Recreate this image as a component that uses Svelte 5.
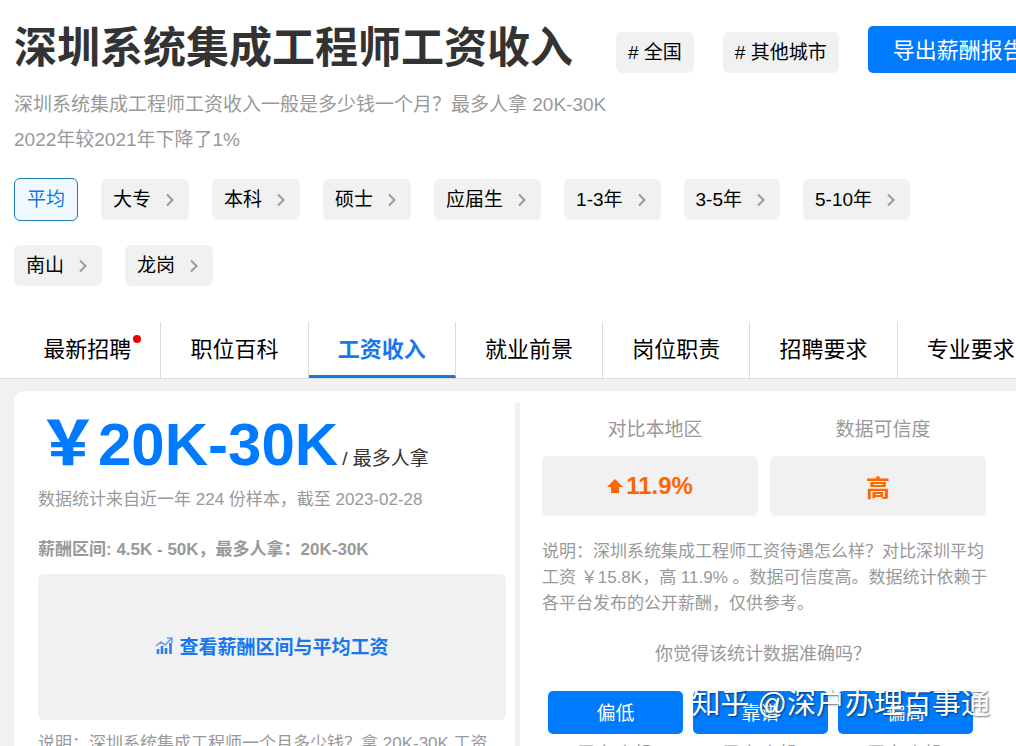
<script lang="ts">
	const filters = ['大专', '本科', '硕士', '应届生', '1-3年', '3-5年', '5-10年', '南山', '龙岗'];

	const tabs = [
		{ name: '最新招聘', dot: true },
		{ name: '职位百科' },
		{ name: '工资收入' },
		{ name: '就业前景' },
		{ name: '岗位职责' },
		{ name: '招聘要求' },
		{ name: '专业要求' }
	];

	const votes = [
		{ name: '偏低', note: '已有人投' },
		{ name: '靠谱', note: '已有人投' },
		{ name: '偏高', note: '已有人投' }
	];

	let activeFilter = $state('平均');
	let activeTab = $state('工资收入');
</script>

<div class="page">
	<header>
		<div class="title-row">
			<h1>深圳系统集成工程师工资收入</h1>
			<a class="chip" href="#country"># 全国</a>
			<a class="chip" href="#cities"># 其他城市</a>
			<button class="export">导出薪酬报告</button>
		</div>
		<p class="intro">
			深圳系统集成工程师工资收入一般是多少钱一个月？最多人拿 20K-30K<br />2022年较2021年下降了1%
		</p>
		<div class="filters">
			<button class="chip" class:active={activeFilter === '平均'} onclick={() => (activeFilter = '平均')}>平均</button>
			{#each filters as filter}
				<button class="chip" class:active={activeFilter === filter} onclick={() => (activeFilter = filter)}>
					{filter}
					<svg class="arrow" viewBox="0 0 10 14" width="10" height="14">
						<path d="M2 1.500l5.500 5.500-5.500 5.500" fill="none" stroke="#999" stroke-width="2" />
					</svg>
				</button>
			{/each}
		</div>
	</header>

	<nav>
		{#each tabs as tab}
			<a
				href="#{tab.name}"
				class:current={activeTab === tab.name}
				onclick={() => (activeTab = tab.name)}
			>
				<span class="label">{tab.name}{#if tab.dot}<i class="dot"></i>{/if}</span>
			</a>
		{/each}
	</nav>

	<main>
		<div class="card">
			<section class="salary">
				<h2><strong>￥20K-30K</strong><small>/ 最多人拿</small></h2>
				<p class="source">数据统计来自近一年 224 份样本，截至 2023-02-28</p>
				<p class="range">薪酬区间: 4.5K - 50K，最多人拿：20K-30K</p>
				<button class="chart">
					<svg viewBox="0 0 18 18" width="18" height="18">
						<path d="M1 9l5-4 4 3 6-6M12 1h5v5" fill="none" stroke="#6a9fe8" stroke-width="1.6" />
						<path d="M3 12v5M7 9v8M11 11v6M15.500 6v11" fill="none" stroke="#2b7fe8" stroke-width="2.6" />
					</svg>
					查看薪酬区间与平均工资
				</button>
				<p class="note">说明：深圳系统集成工程师一个月多少钱？拿 20K-30K 工资</p>
			</section>

			<section class="compare">
				<dl>
					<div>
						<dt>对比本地区</dt>
						<dd>
							<svg viewBox="0 0 16 16" width="16" height="16">
								<path d="M8 1l8 8h-4v6H4V9H0z" fill="#ff6600" />
							</svg>
							11.9%
						</dd>
					</div>
					<div>
						<dt>数据可信度</dt>
						<dd>高</dd>
					</div>
				</dl>
				<p class="note">
					说明：深圳系统集成工程师工资待遇怎么样？对比深圳平均工资 ￥15.8K，高 11.9% 。数据可信度高。数据统计依赖于各平台发布的公开薪酬，仅供参考。
				</p>
				<p class="question">你觉得该统计数据准确吗？</p>
				<div class="votes">
					{#each votes as vote}
						<div>
							<button>{vote.name}</button>
							<span>{vote.note}</span>
						</div>
					{/each}
				</div>
			</section>
		</div>
	</main>

	<div class="watermark">知乎 @深户办理百事通</div>
</div>

<style>
	:global(body) {
		background: #f1f1f1;
		overflow: hidden;
	}

	.page {
		position: relative;
		height: 100vh;
		overflow: hidden;
		font-family: 'Liberation Sans', 'Noto Sans CJK SC', sans-serif;
		font-size: 19px;
		color: #000;
	}

	h1,
	h2,
	p,
	dl,
	dd {
		margin: 0;
	}

	a {
		color: inherit;
		text-decoration: none;
	}

	button {
		border: 0;
		font: inherit;
		color: inherit;
		cursor: pointer;
	}

	header {
		background: #fff;
		padding: 16px 14px 36px;
	}

	.title-row {
		display: flex;
		align-items: center;
		white-space: nowrap;
	}

	h1 {
		font-size: 43px;
		line-height: 64px;
		color: #333;
		margin-right: 43px;
	}

	.chip {
		display: inline-flex;
		align-items: center;
		box-sizing: border-box;
		height: 41px;
		padding: 0 12px 4px;
		border-radius: 6px;
		background: #f1f1f1;
	}

	.title-row .chip {
		margin: 8px 29px 0 0;
	}

	.export {
		flex: none;
		height: 47px;
		padding: 0 25px 2px;
		margin-top: 2px;
		border-radius: 5px;
		background: #007bff;
		color: #fff;
		font-size: 22px;
	}

	.intro {
		margin-top: 7px;
		line-height: 35px;
		color: #999;
	}

	.filters {
		display: flex;
		flex-wrap: wrap;
		gap: 25px 23px;
		margin-top: 22px;
	}

	.filters .chip .arrow {
		margin: 4px 2px 0 14px;
	}

	.filters .chip.active {
		height: 43px;
		margin: -1px 0;
		border: 1px solid #1a7bb8;
		background: #f0f9ff;
		color: #1677dd;
	}

	nav {
		display: flex;
		padding-left: 14px;
		background: #fff;
		border-bottom: 1px solid #ddd;
	}

	nav a {
		flex: 0 0 14.7%;
		box-sizing: border-box;
		height: 56px;
		border-right: 1px solid #ddd;
		text-align: center;
		font-size: 22px;
		line-height: 56px;
		white-space: nowrap;
	}

	nav a.current {
		border-bottom: 3px solid #1677dd;
		color: #1677ee;
		font-weight: bold;
	}

	.label {
		position: relative;
	}

	.dot {
		position: absolute;
		top: -2px;
		right: -10px;
		width: 8px;
		height: 8px;
		border-radius: 50%;
		background: #e60000;
	}

	main {
		padding: 12px 0 0 14px;
	}

	.card {
		display: grid;
		grid-template-columns: 506fr 496fr;
		min-height: 400px;
		padding-top: 12px;
		border-radius: 10px 0 0 0;
		background: #fff;
	}

	.salary {
		padding: 0 9px 0 24px;
		border-right: 5px solid #f1f1f1;
	}

	h2 {
		display: flex;
		align-items: baseline;
		height: 84px;
		line-height: 84px;
		white-space: nowrap;
	}

	h2 strong {
		color: #007bff;
		font-size: 60px;
	}

	h2 small {
		margin-left: 4px;
		color: #333;
		font-size: 19px;
		font-weight: normal;
	}

	.source,
	.range,
	.note {
		font-size: 17px;
		line-height: 26px;
		color: #999;
	}

	.range {
		margin: 24px 0 11px;
		font-weight: bold;
	}

	.chart {
		display: flex;
		align-items: center;
		justify-content: center;
		gap: 6px;
		width: 100%;
		height: 146px;
		margin-bottom: 11px;
		padding-bottom: 4px;
		border-radius: 6px;
		background: #f1f1f1;
		color: #1777ee;
		font-weight: bold;
	}

	.compare {
		padding: 0 24px 0 22px;
	}

	dl {
		display: grid;
		grid-template-columns: 1fr 1fr;
		gap: 12px;
		margin-right: 6px;
		text-align: center;
	}

	dt {
		padding-left: 10px;
		line-height: 53px;
		color: #999;
	}

	dd {
		display: flex;
		align-items: center;
		justify-content: center;
		gap: 3px;
		height: 60px;
		border-radius: 5px;
		background: #f1f1f1;
		color: #ff6600;
		font-size: 24px;
		font-weight: bold;
	}

	.compare .note {
		margin-top: 23px;
	}

	.question {
		margin: 23px 0;
		padding-right: 8px;
		font-size: 18px;
		line-height: 28px;
		text-align: center;
		color: #999;
	}

	.votes {
		display: grid;
		grid-template-columns: repeat(3, 1fr);
		gap: 10px;
		margin: 0 19px 0 6px;
		text-align: center;
	}

	.votes button {
		width: 100%;
		height: 43px;
		padding-bottom: 4px;
		border-radius: 5px;
		background: #007bff;
		color: #fff;
	}

	.votes span {
		display: block;
		margin-top: 8px;
		font-size: 19px;
		line-height: 26px;
		color: #999;
	}

	.watermark {
		position: absolute;
		right: 26px;
		bottom: 22px;
		color: #fff;
		font-size: 29px;
		line-height: 40px;
		text-shadow: 1px 1px 2px rgba(0, 0, 0, 0.6);
	}
</style>
